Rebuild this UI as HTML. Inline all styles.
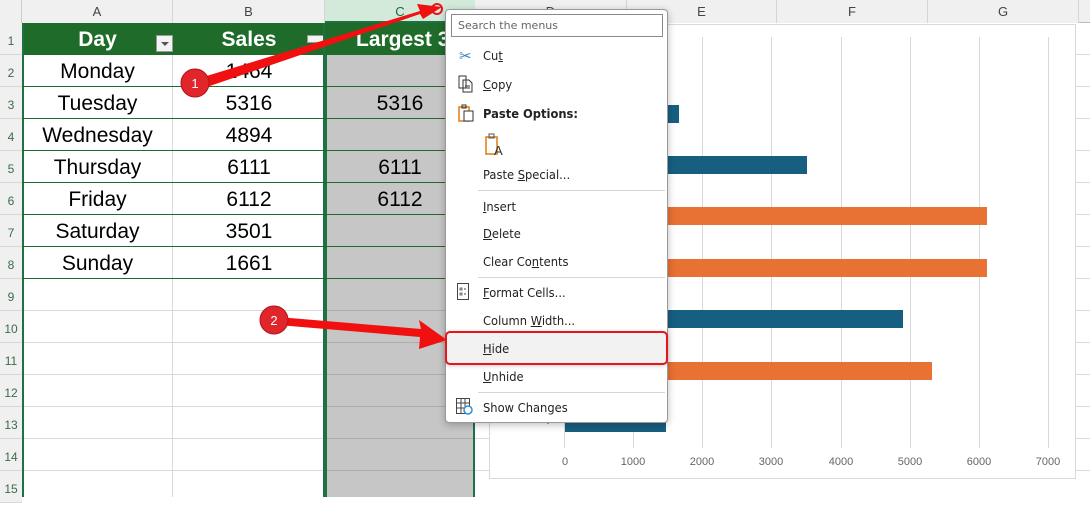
<!DOCTYPE html>
<html><head><meta charset="utf-8"><style>
*{margin:0;padding:0;box-sizing:border-box}
body{width:1090px;height:497px;overflow:hidden;background:#fff;position:relative;font-family:"Liberation Sans",sans-serif}
.a{position:absolute}
.hd{background:#f0f0f0;color:#444;font-size:13px;text-align:center;line-height:23px;top:0;height:23px}
.rn{left:0;width:22px;background:#f0f0f0;color:#3a6b4a;font-size:12px;text-align:center;height:32px;line-height:36px;border-bottom:1px solid #d8d8d8}
.c{font-size:21px;color:#000;text-align:center;height:32px;line-height:33px}
.mi{left:483px;font-size:12.5px;color:#222;font-family:"DejaVu Sans","Liberation Sans",sans-serif;transform:scaleX(.92);transform-origin:left}
.sep{left:478px;width:187px;height:1px;background:#d6d6d6}
.gl{top:37px;width:1px;height:411px;background:#d9d9d9}
.bar{height:18px}
.bl{background:#175f80}.or{background:#e87134}
.ax{top:456px;font-size:11px;color:#666;width:40px;text-align:center}
</style></head><body>
<div class="a hd" style="left:0;width:1090px;border-bottom:1px solid #bbb"></div>
<div class="a hd" style="left:0;width:22px;border-right:1px solid #ccc"></div>
<div class="a hd" style="left:22px;width:151px;border-right:1px solid #d4d4d4">A</div>
<div class="a hd" style="left:173px;width:152px;border-right:1px solid #d4d4d4">B</div>
<div class="a hd" style="left:325px;width:150px;background:#d3eadb;color:#1d6b3c;border-bottom:2px solid #1e7145">C</div>
<div class="a hd" style="left:475px;width:152px;border-right:1px solid #d4d4d4">D</div>
<div class="a hd" style="left:627px;width:150px;border-right:1px solid #d4d4d4">E</div>
<div class="a hd" style="left:777px;width:151px;border-right:1px solid #d4d4d4">F</div>
<div class="a hd" style="left:928px;width:151px;border-right:1px solid #d4d4d4">G</div>
<div class="a" style="left:0;top:23px;width:22px;height:474px;background:#f0f0f0;border-right:1px solid #ccc"></div>
<div class="a rn" style="top:23px">1</div><div class="a rn" style="top:55px">2</div><div class="a rn" style="top:87px">3</div><div class="a rn" style="top:119px">4</div><div class="a rn" style="top:151px">5</div><div class="a rn" style="top:183px">6</div><div class="a rn" style="top:215px">7</div><div class="a rn" style="top:247px">8</div><div class="a rn" style="top:279px">9</div><div class="a rn" style="top:311px">10</div><div class="a rn" style="top:343px">11</div><div class="a rn" style="top:375px">12</div><div class="a rn" style="top:407px">13</div><div class="a rn" style="top:439px">14</div><div class="a rn" style="top:471px">15</div>
<div class="a" style="left:22px;top:23px;width:1068px;height:474px;background:
repeating-linear-gradient(to bottom,transparent 0,transparent 31px,#dadada 31px,#dadada 32px)"></div>
<div class="a" style="left:172px;top:23px;width:1px;height:474px;background:#dadada"></div>
<div class="a" style="left:325px;top:23px;width:150px;height:474px;background:#c6c6c6;border-left:2px solid #1e7145;border-right:2px solid #1e7145"></div>
<div class="a" style="left:327px;top:23px;width:146px;height:474px;background:repeating-linear-gradient(to bottom,transparent 0,transparent 31px,#adadad 31px,#adadad 32px)"></div>
<div class="a" style="left:22px;top:23px;width:453px;height:32px;background:#1e6b2a"></div>
<div class="a c" style="left:22px;top:23px;width:151px;color:#fff;font-weight:bold">Day</div>
<div class="a c" style="left:173px;top:23px;width:152px;color:#fff;font-weight:bold">Sales</div>
<div class="a c" style="left:325px;top:23px;width:150px;color:#fff;font-weight:bold;text-align:left;padding-left:31px">Largest 3</div>
<div class="a" style="left:156px;top:35px;width:17px;height:17px;background:#f3f3f3;border:1px solid #999"><div class="a" style="left:4px;top:6px;border-left:4px solid transparent;border-right:4px solid transparent;border-top:4px solid #555"></div></div>
<div class="a" style="left:307px;top:35px;width:17px;height:8px;background:#f3f3f3;border:1px solid #999"></div>
<div class="a" style="left:22px;top:23px;width:2px;height:474px;background:#1e7145"></div>
<div class="a" style="left:323px;top:23px;width:2px;height:474px;background:#1e7145"></div>
<div class="a" style="left:22px;top:86px;width:453px;height:1px;background:#1e6b2a"></div>
<div class="a" style="left:22px;top:118px;width:453px;height:1px;background:#1e6b2a"></div>
<div class="a" style="left:22px;top:150px;width:453px;height:1px;background:#1e6b2a"></div>
<div class="a" style="left:22px;top:182px;width:453px;height:1px;background:#1e6b2a"></div>
<div class="a" style="left:22px;top:214px;width:453px;height:1px;background:#1e6b2a"></div>
<div class="a" style="left:22px;top:246px;width:453px;height:1px;background:#1e6b2a"></div>
<div class="a" style="left:22px;top:278px;width:453px;height:1px;background:#1e6b2a"></div>
<div class="a c" style="left:22px;top:55px;width:151px">Monday</div><div class="a c" style="left:173px;top:55px;width:152px">1464</div>
<div class="a c" style="left:22px;top:87px;width:151px">Tuesday</div><div class="a c" style="left:173px;top:87px;width:152px">5316</div><div class="a c" style="left:325px;top:87px;width:150px">5316</div>
<div class="a c" style="left:22px;top:119px;width:151px">Wednesday</div><div class="a c" style="left:173px;top:119px;width:152px">4894</div>
<div class="a c" style="left:22px;top:151px;width:151px">Thursday</div><div class="a c" style="left:173px;top:151px;width:152px">6111</div><div class="a c" style="left:325px;top:151px;width:150px">6111</div>
<div class="a c" style="left:22px;top:183px;width:151px">Friday</div><div class="a c" style="left:173px;top:183px;width:152px">6112</div><div class="a c" style="left:325px;top:183px;width:150px">6112</div>
<div class="a c" style="left:22px;top:215px;width:151px">Saturday</div><div class="a c" style="left:173px;top:215px;width:152px">3501</div>
<div class="a c" style="left:22px;top:247px;width:151px">Sunday</div><div class="a c" style="left:173px;top:247px;width:152px">1661</div>
<div class="a" style="left:489px;top:24px;width:587px;height:455px;background:#fff;border:1px solid #d9d9d9"></div>
<div class="a gl" style="left:564px"></div><div class="a gl" style="left:633px"></div><div class="a gl" style="left:702px"></div><div class="a gl" style="left:771px"></div><div class="a gl" style="left:841px"></div><div class="a gl" style="left:910px"></div><div class="a gl" style="left:979px"></div><div class="a gl" style="left:1048px"></div>
<div class="a bar bl" style="left:565px;top:105px;width:114px"></div>
<div class="a bar bl" style="left:565px;top:156px;width:242px"></div>
<div class="a bar or" style="left:565px;top:207px;width:422px"></div>
<div class="a bar or" style="left:565px;top:259px;width:422px"></div>
<div class="a bar bl" style="left:565px;top:310px;width:338px"></div>
<div class="a bar or" style="left:565px;top:362px;width:367px"></div>
<div class="a bar bl" style="left:565px;top:414px;width:101px"></div>
<div class="a" style="left:516px;top:414px;font-size:10px;color:#777">Monday</div>
<div class="a ax" style="left:545px">0</div><div class="a ax" style="left:613px">1000</div><div class="a ax" style="left:682px">2000</div><div class="a ax" style="left:751px">3000</div><div class="a ax" style="left:821px">4000</div><div class="a ax" style="left:890px">5000</div><div class="a ax" style="left:959px">6000</div><div class="a ax" style="left:1028px">7000</div>
<div class="a" style="left:445px;top:9px;width:223px;height:414px;background:#fff;border:1px solid #999;border-radius:4px;box-shadow:0 2px 8px rgba(0,0,0,.25)"></div>
<div class="a" style="left:451px;top:14px;width:212px;height:23px;border:1px solid #8a8a8a;font-size:11px;color:#666;line-height:21px;padding-left:6px;font-family:'DejaVu Sans',sans-serif">Search the menus</div>
<div class="a" style="left:459px;top:47px;font-size:15px;color:#3a7fc0">✂</div>
<div class="a mi" style="top:48px">Cu<u>t</u></div>
<svg class="a" style="left:458px;top:75px" width="16" height="18"><path d="M1 1h7v12H1z M5 5h6l3 3v9H5z" fill="none" stroke="#333"/><path d="M7 11h5M7 13h5" stroke="#333"/></svg>
<div class="a mi" style="top:77px"><u>C</u>opy</div>
<svg class="a" style="left:458px;top:104px" width="16" height="18"><path d="M1 3h10v14H1z" fill="none" stroke="#e07a12" stroke-width="1.5"/><path d="M4 1h4v3H4z" fill="none" stroke="#333"/><path d="M6 7h9v10H6z" fill="#fff" stroke="#333"/></svg>
<div class="a mi" style="top:106px;font-weight:bold">Paste Options:</div>
<svg class="a" style="left:484px;top:133px" width="22" height="24"><path d="M2 4h11v17H2z" fill="none" stroke="#e07a12" stroke-width="1.5"/><path d="M5 1h5v4H5z" fill="none" stroke="#555"/><text x="10" y="22" font-size="13" font-family="Liberation Sans" fill="#333">A</text></svg>
<div class="a mi" style="top:167px">Paste <u>S</u>pecial...</div>
<div class="a sep" style="top:190px"></div>
<div class="a mi" style="top:199px"><u>I</u>nsert</div>
<div class="a mi" style="top:226px"><u>D</u>elete</div>
<div class="a mi" style="top:254px">Clear Co<u>n</u>tents</div>
<div class="a sep" style="top:277px"></div>
<svg class="a" style="left:457px;top:283px" width="14" height="18"><rect x=".5" y=".5" width="11" height="16" fill="none" stroke="#444"/><path d="M3 5h2v2H3zM3 10h2v2H3z" fill="none" stroke="#444" stroke-width=".8"/><path d="M7 6h2M7 11h2" stroke="#444"/></svg>
<div class="a mi" style="top:285px"><u>F</u>ormat Cells...</div>
<div class="a mi" style="top:313px">Column <u>W</u>idth...</div>
<div class="a" style="left:445px;top:331px;width:223px;height:34px;background:#f2f2f2;border:2px solid #e8141c;border-radius:5px;box-shadow:0 1px 4px rgba(0,0,0,.2)"></div>
<div class="a mi" style="top:341px"><u>H</u>ide</div>
<div class="a mi" style="top:369px"><u>U</u>nhide</div>
<div class="a sep" style="top:392px"></div>
<svg class="a" style="left:456px;top:398px" width="18" height="17"><path d="M.5 .5h13v15H.5zM.5 5h13M.5 10h13M5 .5v15M9 .5v8" fill="none" stroke="#444"/><circle cx="12" cy="12" r="4" fill="#fff" stroke="#2f8fd8" stroke-width="1.5"/></svg>
<div class="a mi" style="top:400px">Show Changes</div>
<svg class="a" style="left:0;top:0" width="1090" height="497">
<polygon points="200,78 420,11 417,4 442,7 423,19 420,14 204,88" fill="#f01010"/>
<circle cx="437" cy="9" r="5" fill="none" stroke="#e8141c" stroke-width="2"/>
<polygon points="278,317 421,329 419,320 447,340 419,349 420,337 278,325" fill="#f01010"/>
<circle cx="195" cy="83" r="14" fill="#e0262b" stroke="#b31217" stroke-width="1"/>
<text x="195" y="88" font-size="13" fill="#fff" text-anchor="middle" font-family="Liberation Sans">1</text>
<circle cx="274" cy="320" r="14" fill="#e0262b" stroke="#b31217" stroke-width="1"/>
<text x="274" y="325" font-size="13" fill="#fff" text-anchor="middle" font-family="Liberation Sans">2</text>
</svg>
</body></html>
